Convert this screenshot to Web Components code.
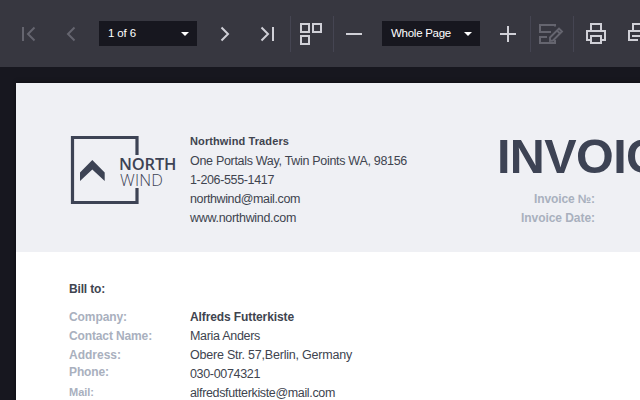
<!DOCTYPE html>
<html lang="en"><head><meta charset="utf-8"><title>Report viewer</title>
<style>
html,body{margin:0;width:640px;height:400px;overflow:hidden;background:#17171f;font-family:"Liberation Sans",Arial,sans-serif}
</style></head><body>
<report-viewer></report-viewer>
<script>
const define=(name,html,init)=>customElements.define(name,class extends HTMLElement{
  connectedCallback(){
    if(this.shadowRoot)return;
    this.attachShadow({mode:"open"}).innerHTML=html;
    if(init)init(this,this.shadowRoot);
  }
});

// One line of text, tracked so that it fills the width given in "w".
define("text-line",`<style>:host{display:block;white-space:nowrap;font-size:12.5px;line-height:19px;height:19px;color:#40444f}:host([bold]){font-weight:bold}:host([muted]){color:#a9b0be;font-weight:bold}:host([bold]),:host([muted]){font-size:12px}:host([small]){font-size:11px}span{display:inline-block}</style><span><slot></slot></span>`,(el,root)=>{
  const w=parseFloat(el.getAttribute("w"));
  if(!w)return;
  const s=root.querySelector("span");
  s.style.letterSpacing=(w-s.getBoundingClientRect().width)/el.textContent.length+"px";
});

const icons={
 first:['7 13 42 42','<path d="M23 27v14" stroke-width="2"/><path d="M34.5 27.5L28 34l6.500 6.500" stroke-width="2"/>'],
 prev:['50 13 42 42','<path d="M74.500 27.500L68 34l6.500 6.500" stroke-width="2"/>'],
 next:['204 13 42 42','<path d="M221.500 27.500L228 34l-6.500 6.500" stroke-width="2"/>'],
 last:['246 13 42 42','<path d="M261.500 27.500L268 34l-6.500 6.500M273 27v14" stroke-width="2"/>'],
 tiles:['291 13 42 42','<path d="M301 24h8v8h-8zM313 24h8v8h-8zM301 36h8v8h-8z" stroke-width="2"/>'],
 minus:['334 13 42 42','<path d="M346 34h16" stroke-width="2"/>'],
 plus:['487 13 42 42','<path d="M500 34h16M508 26v16" stroke-width="2"/>'],
 edit:['531 13 42 42','<path d="M555 26.500V25h-15v7h11M547 37h-7v6h15v-3" stroke-width="2"/><path d="M550 41v-3.500l9-9 3 3-9 9zM557 30.500l3 3" stroke-width="1.900"/>'],
 print:['575 13 42 42','<path d="M591 31v-7h10v7M591 40h-4v-9h18v9h-4M591 36h10v7h-10z" stroke-width="2"/>'],
 printpage:['617 13 42 42','<path d="M633 31v-7h10v7M638 40h-9v-9h18v9M632 36h8" stroke-width="2"/>']
};
define("tool-button",`<style>:host{display:block;flex:none;width:42px;height:42px;color:#d0d0d7}:host([disabled]){color:#65656f}svg{display:block;fill:none;stroke:currentColor}</style><svg width="42" height="42"></svg>`,(el,root)=>{
  const [box,body]=icons[el.getAttribute("icon")],svg=root.querySelector("svg");
  svg.setAttribute("viewBox",box);svg.innerHTML=body;
});
define("tool-divider",`<style>:host{display:block;flex:none;width:1px;height:36px;background:#454552}</style>`);
define("tool-select",`<style>:host{display:flex;flex:none;box-sizing:border-box;width:98px;height:25px;align-items:center;justify-content:space-between;padding:0 8px 0 9px;background:#17171f;margin:0 7px}text-line{font-size:11.5px;height:25px;line-height:25px;color:#fff}svg{display:block}</style><text-line><slot></slot></text-line><svg width="8" height="4"><path d="M0 0h8L4 4z" fill="#fff"/></svg>`,(el,root)=>{
  const t=root.querySelector("text-line"),w=parseFloat(el.getAttribute("w"));
  const s=t.shadowRoot.querySelector("span");
  s.style.letterSpacing=(w-s.getBoundingClientRect().width)/el.textContent.length+"px";
});
define("viewer-toolbar",`<style>:host{display:flex;box-sizing:border-box;align-items:center;width:680px;height:67px;padding:1px 0 0 7px;background:#373740}tool-select{margin-bottom:1px}</style>
<tool-button icon="first" disabled></tool-button><tool-button icon="prev" disabled style="margin-left:1px"></tool-button>
<tool-select w="28" style="margin-right:7px">1 of 6</tool-select>
<tool-button icon="next"></tool-button><tool-button icon="last"></tool-button><tool-divider style="margin-left:2px"></tool-divider>
<tool-button icon="tiles"></tool-button><tool-divider></tool-divider><tool-button icon="minus"></tool-button>
<tool-select w="60" style="margin-left:6px">Whole Page</tool-select>
<tool-button icon="plus"></tool-button><tool-divider style="margin-left:1px"></tool-divider><tool-button icon="edit" disabled></tool-button><tool-divider></tool-divider>
<tool-button icon="print" style="margin-left:1px"></tool-button><tool-button icon="printpage"></tool-button>`);
define("company-logo",`<style>:host{display:block;width:108px;height:70px}svg{display:block}text{font-family:"Open Sans","Noto Sans",sans-serif;fill:#3d4354}</style>
<svg width="108" height="70"><path d="M67 19V1.500h-64.500v65h64.500V52" fill="none" stroke="#3d4354" stroke-width="3.200"/><path d="M10 36.500L22.300 24 34.700 36.500V45L22.300 33.500 10 45z" fill="#3d4354"/><text x="49" y="34" font-size="16.500" font-weight="600" textLength="57.500">NORTH</text><text x="50" y="49.500" font-size="16.500" font-weight="300" textLength="43">WIND</text></svg>`);
define("invoice-header",`<style>:host{display:grid;box-sizing:border-box;height:169px;grid-template-columns:120px 290px 240px;padding:49px 0 0 54px;background:#eff0f4}company-logo{margin-top:4px}text-line[small]{height:20px}.title{font-size:48.5px;font-weight:bold;line-height:56px;height:60px;margin:-4px 0 0 17px;letter-spacing:-.6px;color:#3d4354;white-space:nowrap}.meta{display:flex;flex-direction:column;align-items:flex-end;width:115px;margin-top:2px}</style>
<company-logo></company-logo><div><text-line bold small w="99">Northwind Traders</text-line><text-line w="217">One Portals Way, Twin Points WA, 98156</text-line><text-line w="84">1-206-555-1417</text-line><text-line w="110">northwind@mail.com</text-line><text-line w="106">www.northwind.com</text-line></div>
<div><div class="title">INVOICE</div><div class="meta"><text-line muted w="61">Invoice №:</text-line><text-line muted w="74">Invoice Date:</text-line></div></div>`);
define("billing-details",`<style>:host{display:block;padding:28px 0 0 53px}.cols{display:grid;grid-template-columns:121px 1fr;margin-top:9px}.phone{margin-top:-2px}.mail{margin-top:1px}</style>
<text-line bold w="36">Bill to:</text-line><div class="cols"><div><text-line muted w="58">Company:</text-line><text-line muted w="83">Contact Name:</text-line><text-line muted w="52">Address:</text-line><text-line muted w="40" class="phone">Phone:</text-line><text-line muted small w="25" class="mail">Mail:</text-line></div>
<div><text-line bold w="104">Alfreds Futterkiste</text-line><text-line w="70">Maria Anders</text-line><text-line w="162">Obere Str. 57,Berlin, Germany</text-line><text-line w="70">030-0074321</text-line><text-line w="145">alfredsfutterkiste@mail.com</text-line></div></div>`);
define("report-page",`<style>:host{display:block;margin:16px 0 0 16px;width:664px;height:700px;background:#fff;box-shadow:0 0 4px #0c0c10}</style><invoice-header></invoice-header><billing-details></billing-details>`);
define("report-viewer",`<style>:host{display:flex;flex-direction:column;width:640px;height:400px;overflow:hidden}viewer-toolbar,report-page{flex:none}</style><viewer-toolbar></viewer-toolbar><report-page></report-page>`);
</script></body></html>
